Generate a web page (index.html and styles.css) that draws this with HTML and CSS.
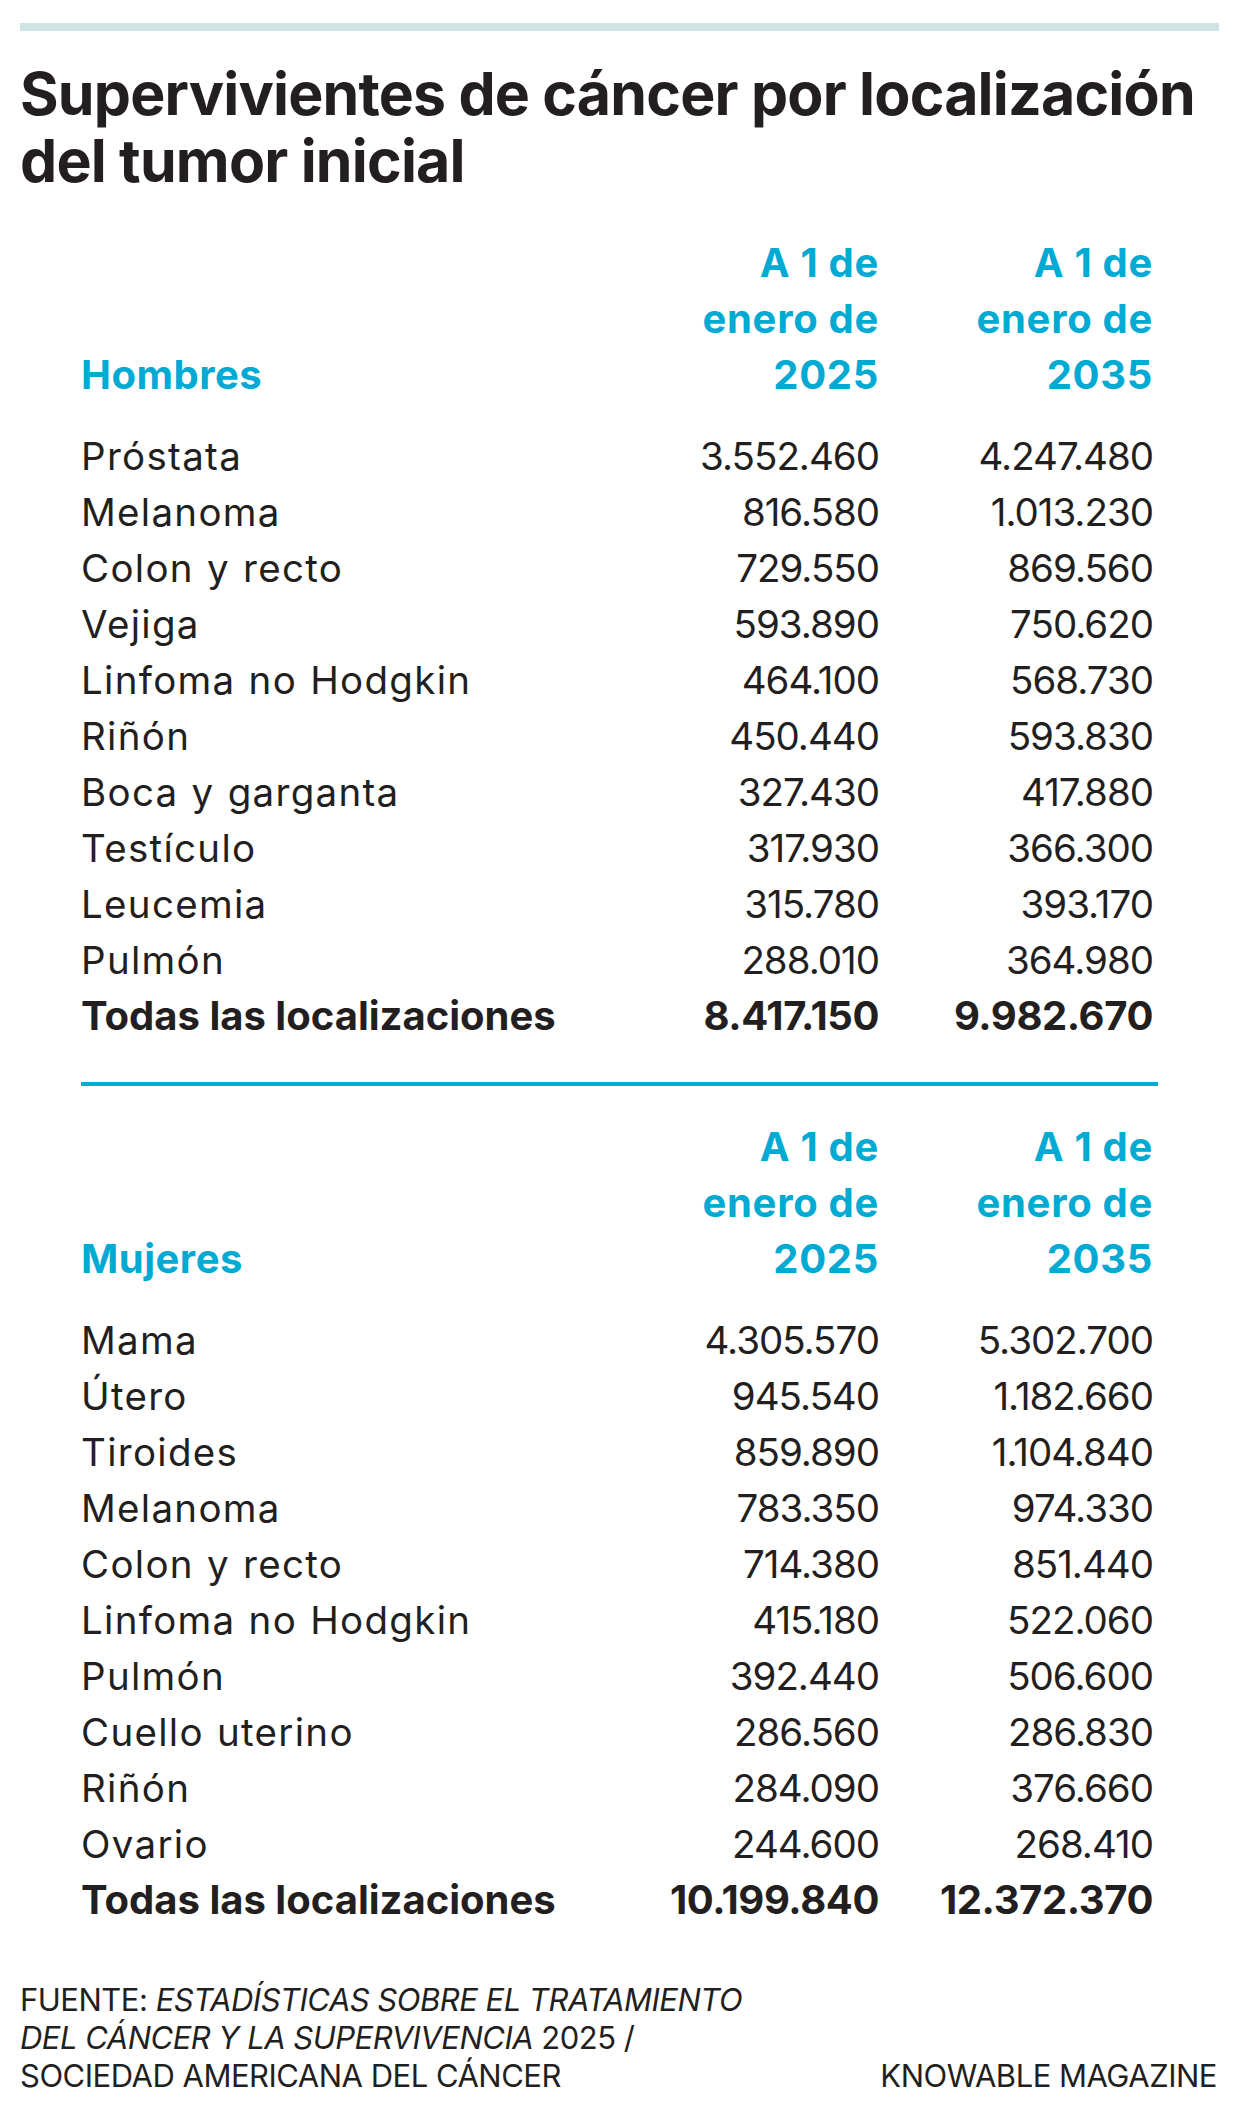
FILE: index.html
```html
<!DOCTYPE html>
<html lang="es">
<head>
<meta charset="utf-8">
<title>Supervivientes de cáncer por localización del tumor inicial</title>
<link rel="stylesheet" href="styles.css">
</head>
<body>
<div class="page">
  <div class="topbar"></div>
  <h1 class="title">Supervivientes de cáncer por localización<br>del tumor inicial</h1>

  <section class="sec">
    <div class="head">
      <div class="group">Hombres</div>
      <div class="colhead">A 1 de<br>enero de<br>2025</div>
      <div class="colhead">A 1 de<br>enero de<br>2035</div>
    </div>
    <div class="rows">
      <div class="row"><span class="lab">Próstata</span><span class="num">3.552.460</span><span class="num">4.247.480</span></div>
      <div class="row"><span class="lab">Melanoma</span><span class="num">816.580</span><span class="num">1.013.230</span></div>
      <div class="row"><span class="lab">Colon y recto</span><span class="num">729.550</span><span class="num">869.560</span></div>
      <div class="row"><span class="lab">Vejiga</span><span class="num">593.890</span><span class="num">750.620</span></div>
      <div class="row"><span class="lab">Linfoma no Hodgkin</span><span class="num">464.100</span><span class="num">568.730</span></div>
      <div class="row"><span class="lab">Riñón</span><span class="num">450.440</span><span class="num">593.830</span></div>
      <div class="row"><span class="lab">Boca y garganta</span><span class="num">327.430</span><span class="num">417.880</span></div>
      <div class="row"><span class="lab">Testículo</span><span class="num">317.930</span><span class="num">366.300</span></div>
      <div class="row"><span class="lab">Leucemia</span><span class="num">315.780</span><span class="num">393.170</span></div>
      <div class="row"><span class="lab">Pulmón</span><span class="num">288.010</span><span class="num">364.980</span></div>
      <div class="row total"><span class="lab">Todas las localizaciones</span><span class="num">8.417.150</span><span class="num">9.982.670</span></div>
    </div>
  </section>

  <div class="divider"></div>

  <section class="sec sec2">
    <div class="head">
      <div class="group">Mujeres</div>
      <div class="colhead">A 1 de<br>enero de<br>2025</div>
      <div class="colhead">A 1 de<br>enero de<br>2035</div>
    </div>
    <div class="rows">
      <div class="row"><span class="lab">Mama</span><span class="num">4.305.570</span><span class="num">5.302.700</span></div>
      <div class="row"><span class="lab">Útero</span><span class="num">945.540</span><span class="num">1.182.660</span></div>
      <div class="row"><span class="lab">Tiroides</span><span class="num">859.890</span><span class="num">1.104.840</span></div>
      <div class="row"><span class="lab">Melanoma</span><span class="num">783.350</span><span class="num">974.330</span></div>
      <div class="row"><span class="lab">Colon y recto</span><span class="num">714.380</span><span class="num">851.440</span></div>
      <div class="row"><span class="lab">Linfoma no Hodgkin</span><span class="num">415.180</span><span class="num">522.060</span></div>
      <div class="row"><span class="lab">Pulmón</span><span class="num">392.440</span><span class="num">506.600</span></div>
      <div class="row"><span class="lab">Cuello uterino</span><span class="num">286.560</span><span class="num">286.830</span></div>
      <div class="row"><span class="lab">Riñón</span><span class="num">284.090</span><span class="num">376.660</span></div>
      <div class="row"><span class="lab">Ovario</span><span class="num">244.600</span><span class="num">268.410</span></div>
      <div class="row total"><span class="lab">Todas las localizaciones</span><span class="num">10.199.840</span><span class="num">12.372.370</span></div>
    </div>
  </section>

  <footer class="foot">
    <p class="source">FUENTE: <em>ESTADÍSTICAS SOBRE EL TRATAMIENTO<br>DEL CÁNCER Y LA SUPERVIVENCIA</em> 2025 /<br>SOCIEDAD AMERICANA DEL CÁNCER</p>
    <p class="brand">KNOWABLE MAGAZINE</p>
  </footer>
</div>
</body>
</html>
```
FILE: styles.css
```css
html, body {
  margin: 0;
  padding: 0;
  background: #ffffff;
}

body {
  font-family: "Inter", "Open Sans", "Liberation Sans", sans-serif;
  color: #231f20;
}

.page {
  width: 1199px;
  padding: 23px 21px 0 20px;
}

.topbar {
  height: 8px;
  background: #cfe4e7;
}

.title {
  margin: 29px 0 0 0;
  font-size: 59px;
  line-height: 67px;
  font-weight: 700;
  letter-spacing: -0.8px;
  color: #231f20;
}

.sec {
  margin: 41px 0 0 61px;
  width: 1072px;
}

.sec2 {
  margin-top: 33px;
}

.head,
.row {
  display: grid;
  grid-template-columns: 1fr 240px 274px;
}

.head {
  align-items: end;
  color: #00aad3;
  font-weight: 700;
  font-size: 40px;
  line-height: 56px;
}

.colhead {
  text-align: right;
  letter-spacing: 0.7px;
}

.group {
  letter-spacing: 0.5px;
}

.rows {
  margin-top: 25px;
}

.row {
  font-size: 38.5px;
  line-height: 56px;
  height: 56px;
}

.lab {
  letter-spacing: 1.3px;
  word-spacing: 1px;
}

.num {
  text-align: right;
  letter-spacing: -1px;
}

.row.total {
  font-weight: 700;
  font-size: 40px;
}

.row.total .lab {
  letter-spacing: 0;
  word-spacing: 0;
}

.row.total .num {
  letter-spacing: -0.4px;
}

.divider {
  margin: 38px 0 0 61px;
  width: 1077px;
  height: 4px;
  background: #00aed5;
}

.foot {
  margin-top: 53px;
  display: flex;
  justify-content: space-between;
  align-items: flex-end;
  font-size: 31px;
  line-height: 38px;
  letter-spacing: -0.5px;
  color: #231f20;
}

.foot p {
  margin: 0;
}

.source em {
  font-style: italic;
}

.brand {
  padding-right: 2px;
}
```
